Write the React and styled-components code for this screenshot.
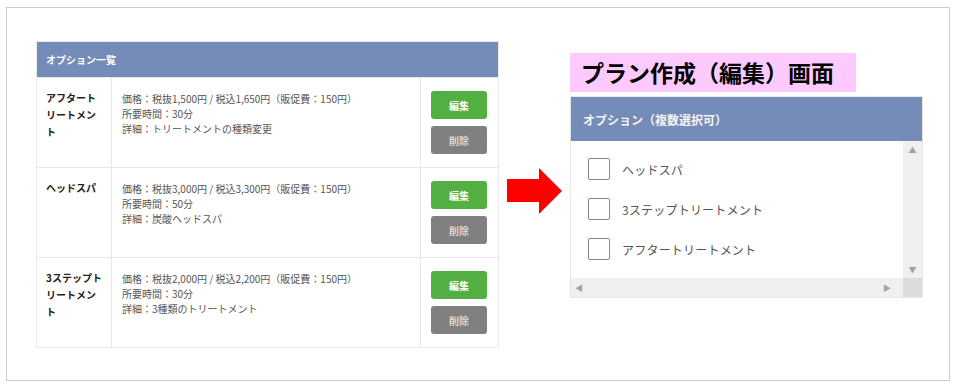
import React from 'react';
import styled, { createGlobalStyle } from 'styled-components';

const GlobalStyle = createGlobalStyle`
    body {
        margin: 0;
        background: #ffffff;
        font-family: "Noto Sans CJK JP", "Noto Sans", sans-serif;
    }
`;

const options = [
    {
        name: 'アフタートリートメント',
        price: '価格：税抜1,500円 / 税込1,650円（販促費：150円）',
        time: '所要時間：30分',
        detail: '詳細：トリートメントの種類変更',
    },
    {
        name: 'ヘッドスパ',
        price: '価格：税抜3,000円 / 税込3,300円（販促費：150円）',
        time: '所要時間：50分',
        detail: '詳細：炭酸ヘッドスパ',
    },
    {
        name: '3ステップトリートメント',
        price: '価格：税抜2,000円 / 税込2,200円（販促費：150円）',
        time: '所要時間：30分',
        detail: '詳細：3種類のトリートメント',
    },
];

const choices = ['ヘッドスパ', '3ステップトリートメント', 'アフタートリートメント'];

function App() {
    return (
        <>
            <GlobalStyle />
            <Frame>
                <OptionTable>
                    <colgroup>
                        <Col width={75} />
                        <Col width={309} />
                        <Col width={78} />
                    </colgroup>
                    <thead>
                        <tr>
                            <HeadCell colSpan={3}>オプション一覧</HeadCell>
                        </tr>
                    </thead>
                    <tbody>
                        {options.map((opt) => (
                            <Row key={opt.name}>
                                <NameCell>{opt.name}</NameCell>
                                <DescCell>
                                    {opt.price}
                                    <br />
                                    {opt.time}
                                    <br />
                                    {opt.detail}
                                </DescCell>
                                <ActionCell>
                                    <ActionButton color="#52b043">編集</ActionButton>
                                    <ActionButton color="#808080" muted>削除</ActionButton>
                                </ActionCell>
                            </Row>
                        ))}
                    </tbody>
                </OptionTable>

                <Arrow viewBox="0 0 55 46">
                    <polygon points="0,11 32,11 32,0 55,23 32,46 32,34 0,34" fill="#ff0000" />
                </Arrow>

                <RightSide>
                    <Title>プラン作成（編集）画面</Title>
                    <Panel>
                        <PanelHeader>オプション（複数選択可）</PanelHeader>
                        <PanelBody>
                            <List>
                                {choices.map((c) => (
                                    <Choice key={c}>
                                        <Box />
                                        {c}
                                    </Choice>
                                ))}
                            </List>
                            <VScroll>
                                <ScrollArrow>▲</ScrollArrow>
                                <ScrollArrow>▼</ScrollArrow>
                            </VScroll>
                            <HScroll>
                                <ScrollArrow>◀</ScrollArrow>
                                <ScrollArrow>▶</ScrollArrow>
                            </HScroll>
                            <Corner />
                        </PanelBody>
                    </Panel>
                </RightSide>
            </Frame>
        </>
    );
}

const Frame = styled.div`
    box-sizing: border-box;
    margin: 7px 0 0 6px;
    width: 944px;
    height: 374px;
    border: 1px solid #cccccc;
    padding: 33px 0 0 29px;
    display: flex;
    align-items: flex-start;
`;

const OptionTable = styled.table`
    width: 462px;
    border-collapse: collapse;
    table-layout: fixed;
    border: 1px solid #ebebeb;
    color: #555555;
    font-size: 10px;
    flex-shrink: 0;
`;

const Col = styled.col`
    width: ${(p) => p.width}px;
`;

const HeadCell = styled.th`
    height: 35px;
    padding: 0 0 0 9px;
    background: #748cb7;
    color: #ffffff;
    font-weight: 700;
    text-align: left;
    font-size: 10px;
`;

const Row = styled.tr`
    height: 90px;
    border-top: 1px solid #e8e8e8;
`;

const NameCell = styled.td`
    padding: 11px 7px 0 9px;
    vertical-align: top;
    font-weight: 700;
    color: #222222;
    line-height: 17px;
    border-right: 1px solid #e8e8e8;
`;

const DescCell = styled.td`
    padding: 13px 8px 0 10px;
    vertical-align: top;
    line-height: 15px;
    white-space: nowrap;
    border-right: 1px solid #e8e8e8;
`;

const ActionCell = styled.td`
    padding: 13px 0 0 10px;
    vertical-align: top;
`;

const ActionButton = styled.div`
    width: 56px;
    height: 28px;
    margin-bottom: 7px;
    border-radius: 3px;
    background: ${(p) => p.color};
    color: ${(p) => (p.muted ? '#e6e6e6' : '#ffffff')};
    font-size: 10px;
    font-weight: ${(p) => (p.muted ? 500 : 700)};
    display: flex;
    align-items: center;
    justify-content: center;
`;

const Arrow = styled.svg`
    width: 55px;
    height: 46px;
    margin: 127px 8px 0 8px;
    flex-shrink: 0;
`;

const RightSide = styled.div`
    margin-top: 12px;
    display: flex;
    flex-direction: column;
    gap: 4px;
`;

const Title = styled.div`
    width: 286px;
    height: 39px;
    box-sizing: border-box;
    padding-left: 11px;
    background: #fccafc;
    color: #000000;
    font-size: 23px;
    font-weight: 700;
    line-height: 39px;
`;

const Panel = styled.div`
    width: 353px;
    border: 1px solid #e6e6e6;
    box-sizing: border-box;
`;

const PanelHeader = styled.div`
    height: 44px;
    background: #748cb7;
    color: #f4f4f4;
    font-size: 12px;
    font-weight: 700;
    padding-left: 12px;
    display: flex;
    align-items: center;
`;

const PanelBody = styled.div`
    display: grid;
    grid-template-columns: 1fr 19px;
    grid-template-rows: 137px 19px;
`;

const List = styled.div`
    padding: 17px 0 0 17px;
    display: flex;
    flex-direction: column;
    gap: 18px;
`;

const Choice = styled.label`
    display: flex;
    align-items: center;
    gap: 12px;
    font-size: 12px;
    color: #555555;
    letter-spacing: 0.2px;
`;

const Box = styled.span`
    width: 22px;
    height: 22px;
    box-sizing: border-box;
    border: 1.5px solid #888888;
    border-radius: 2px;
    background: #ffffff;
`;

const VScroll = styled.div`
    background: #f0f0f0;
    display: flex;
    flex-direction: column;
    justify-content: space-between;
    align-items: center;
    padding: 5px 0 4px;
`;

const HScroll = styled.div`
    background: #f0f0f0;
    display: flex;
    justify-content: space-between;
    align-items: center;
    padding: 0 12px 0 4px;
`;

const ScrollArrow = styled.span`
    color: #a3a3a3;
    font-size: 8px;
    line-height: 8px;
`;

const Corner = styled.div`
    background: #dcdcdc;
`;

export default App;
